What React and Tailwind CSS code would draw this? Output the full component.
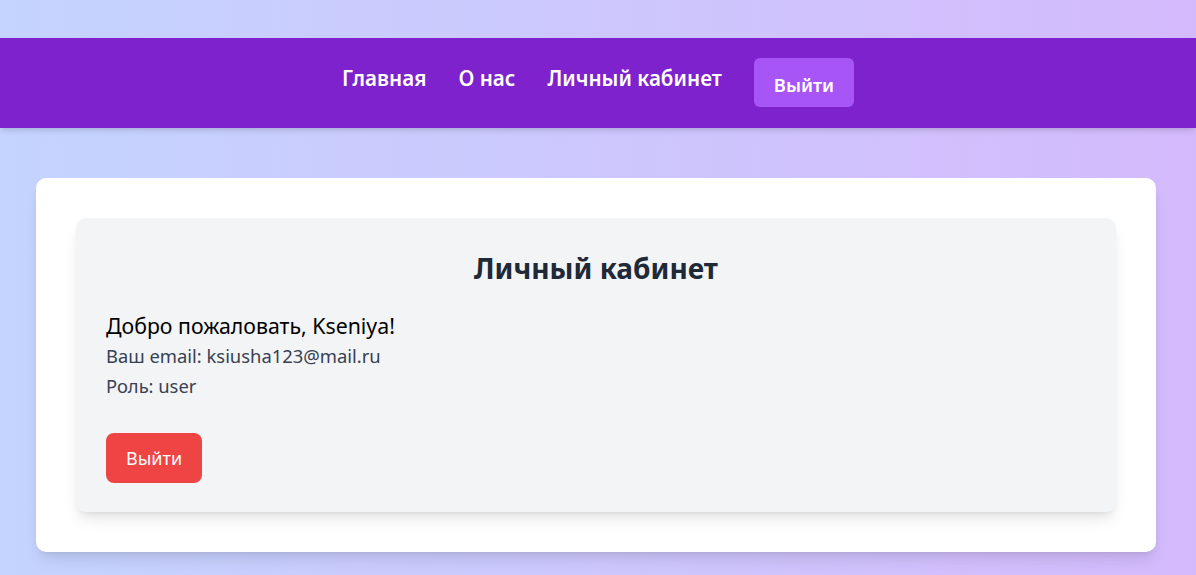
const navLinks = ['Главная', 'О нас', 'Личный кабинет']

const user = { name: 'Kseniya', email: 'ksiusha123@mail.ru', role: 'user' }

const Navbar = () => (
  <nav className="h-[90px] bg-[#7e22ce] shadow-md flex justify-center items-start pt-5 gap-8">
    {navLinks.map((label) => (
      <a key={label} href="#" className="mt-[5px] text-[20.6px] leading-[30px] font-semibold text-white">
        {label}
      </a>
    ))}
    <button
      type="button"
      className="h-[49px] px-5 rounded-md bg-[#a855f7] text-white text-[18.4px] font-semibold pt-[4px]"
    >
      Выйти
    </button>
  </nav>
)

export default function App() {
  return (
    <div
      className="min-h-screen bg-linear-to-r from-[#c4d4fe] to-[#d4bafc] pt-[38px]"
      style={{ fontFamily: '"Noto Sans", "Open Sans", sans-serif' }}
    >
      <Navbar />
      <main className="pl-9 pr-10 pt-[50px]">
        <div className="bg-white rounded-[10px] shadow-lg p-10">
          <div className="bg-gray-100 rounded-[10px] shadow-lg px-[30px] pt-8 pb-[29px]">
            <h2 className="text-center text-[28px] leading-9 font-bold text-[#1f2937]">Личный кабинет</h2>
            <p className="mt-[25px] text-[21.3px] leading-[30px] text-black">Добро пожаловать, {user.name}!</p>
            <p className="text-[18.4px] leading-[30px] text-[#374151]">Ваш email: {user.email}</p>
            <p className="text-[18.4px] leading-[30px] text-[#374151]">Роль: {user.role}</p>
            <button
              type="button"
              className="mt-[32px] h-[50px] px-5 rounded-lg bg-[#ef4444] text-white text-[18px]"
            >
              Выйти
            </button>
          </div>
        </div>
      </main>
    </div>
  )
}
